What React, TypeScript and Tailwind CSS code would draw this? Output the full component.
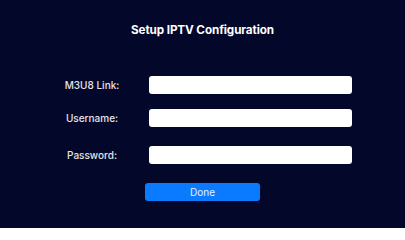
const fields = [
  { label: "M3U8 Link:", type: "text", mt: "mt-0" },
  { label: "Username:", type: "text", mt: "mt-[15px]" },
  { label: "Password:", type: "password", mt: "mt-[19px]" },
];

export default function App() {
  return (
    <div
      className="flex h-[228px] w-[405px] flex-col items-center bg-[#03072a] text-white"
      style={{ fontFamily: "Inter, 'Noto Sans', sans-serif" }}
    >
      <h1 className="mt-[23px] text-[11.7px] leading-[14px] font-bold tracking-[-0.1px]">
        Setup IPTV Configuration
      </h1>

      <div className="mt-[39px] flex w-full flex-col">
        {fields.map((f) => (
          <div key={f.label} className={`flex items-center ${f.mt}`}>
            <label className="ml-[42px] w-[100px] text-center text-[10px] font-medium text-white/90">
              {f.label}
            </label>
            <input
              type={f.type}
              className="ml-[7px] h-[18px] w-[203px] rounded-[3px] bg-white px-1 text-[10px] text-black outline-none"
            />
          </div>
        ))}
      </div>

      <button className="mt-[19px] h-[18px] w-[115px] rounded-[3px] bg-[#0a7aff] text-[10px] leading-none text-white/90">
        Done
      </button>
    </div>
  );
}
